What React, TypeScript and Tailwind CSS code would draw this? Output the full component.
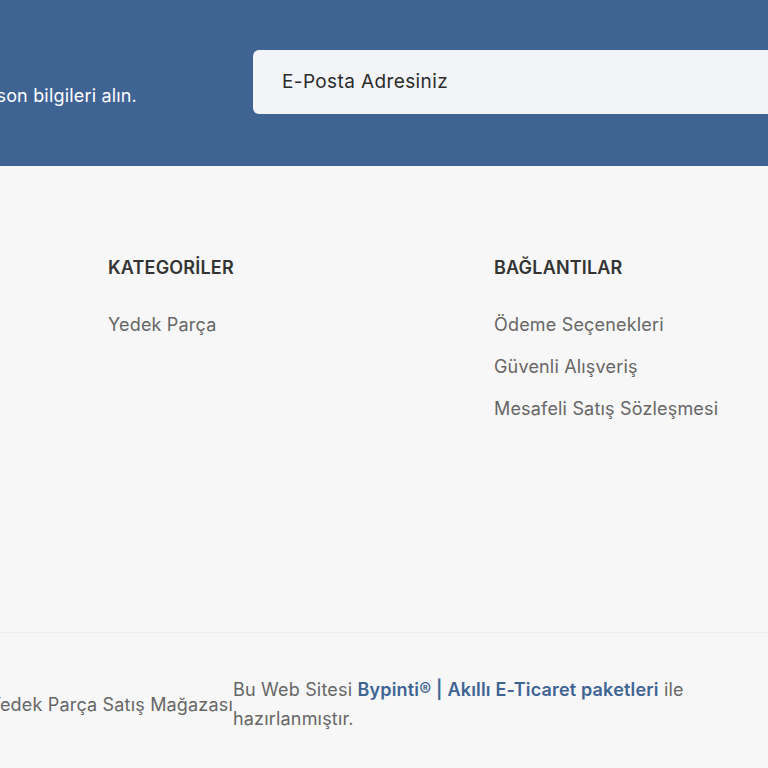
import React from 'react';

const CATEGORY_LINKS = ['Yedek Parça'];
const INFO_LINKS = ['Ödeme Seçenekleri', 'Güvenli Alışveriş', 'Mesafeli Satış Sözleşmesi'];

const FooterColumn: React.FC<{ title: string; links: string[] }> = ({ title, links }) => (
  <div className="w-[386px] shrink-0">
    <h4 className="text-[18px] leading-6 font-semibold tracking-[0.01em] text-[#333333]">{title}</h4>
    <ul className="mt-6">
      {links.map((link) => (
        <li key={link} className="text-[18px] leading-[42px] tracking-[0.01em] text-[#666666]">
          {link}
        </li>
      ))}
    </ul>
  </div>
);

const App: React.FC = () => {
  return (
    <div
      className="w-[768px] h-[768px] overflow-hidden bg-[#f7f7f7]"
      style={{ fontFamily: 'Inter, "Noto Sans", sans-serif' }}
    >
      {/* Newsletter band */}
      <section className="h-[166px] bg-[#3f6494] flex items-start pt-[50px]">
        <div className="w-[137px] shrink-0 flex justify-end mt-[34px]">
          <p className="whitespace-nowrap text-[18px] leading-6 tracking-[0.01em] text-white">
            Kampanyalardan haberdar olmak için bültenimize kayıt olun, en son bilgileri alın.
          </p>
        </div>
        <div className="ml-[116px] w-[640px] shrink-0 h-[64px] rounded-md bg-[#f2f4f8] flex items-center px-[29px]">
          <span className="text-[19px] tracking-[0.02em] text-[#2b2b2b]">E-Posta Adresiniz</span>
        </div>
      </section>

      {/* Footer links */}
      <section className="h-[467px] flex pl-[108px] pt-[90px] border-b border-[#ececec]">
        <FooterColumn title="KATEGORİLER" links={CATEGORY_LINKS} />
        <FooterColumn title="BAĞLANTILAR" links={INFO_LINKS} />
      </section>

      {/* Copyright row */}
      <section className="flex items-center pt-[42px]">
        <div className="w-[233px] shrink-0 flex justify-end">
          <p className="whitespace-nowrap text-[18px] leading-[29px] tracking-[0.01em] text-[#666666]">
            © 2024 Tüm hakları saklıdır. Yedek Parça Satış Mağazası
          </p>
        </div>
        <p className="w-[470px] text-[18px] leading-[29px] tracking-[0.01em] text-[#666666]">
          Bu Web Sitesi{' '}
          <a className="font-semibold text-[#3f6494]">Bypinti® | Akıllı E-Ticaret paketleri</a> ile
          hazırlanmıştır.
        </p>
      </section>
    </div>
  );
};

export default App;
